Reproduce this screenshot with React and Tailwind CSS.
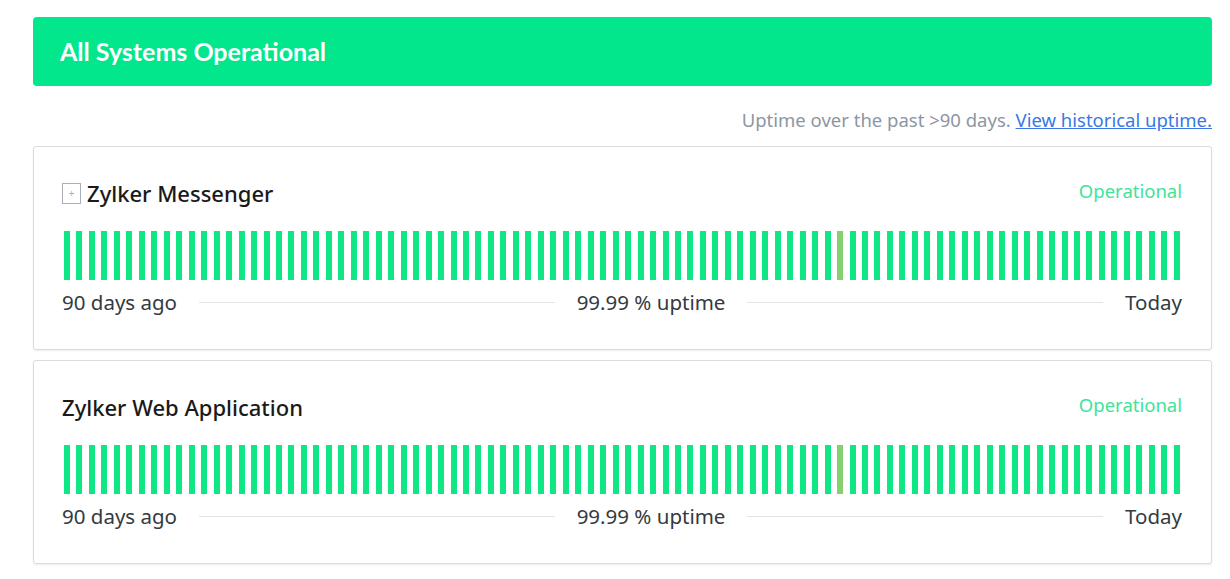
import React from "react";

const DAYS = 90;
// day 62 had a short partial outage
const degraded = new Set([62]);

const components = [
  { name: "Zylker Messenger", expandable: true },
  { name: "Zylker Web Application", expandable: false },
];

function UptimeBars() {
  return (
    <div className="flex justify-between h-[49px] mx-[2px]">
      {Array.from({ length: DAYS }).map((_, i) => (
        <div
          key={i}
          className={`w-[6px] h-full ${degraded.has(i) ? "bg-[#86d070]" : "bg-[#0fe785]"}`}
        />
      ))}
    </div>
  );
}

function ComponentCard({ name, expandable }) {
  return (
    <div className="bg-white border border-[#dcdcdc] rounded-[3px] shadow-[0_1px_2px_rgba(0,0,0,0.08)] pl-[28px] pr-[29px] pt-[31px] pb-[35px]">
      <div className="flex items-center justify-between h-[30px]">
        <div className="flex items-center gap-[6px]">
          {expandable && (
            <span className="w-[19px] h-[21px] border border-[#a9b0ba] flex items-center justify-center text-[10px] leading-none text-[#a9b0ba]">
              +
            </span>
          )}
          <h2 className="text-[22px] font-medium text-[#1a1a1a]">{name}</h2>
        </div>
        <span className="text-[18.5px] text-[#40e39a] -mt-[4px]">Operational</span>
      </div>
      <div className="mt-[23px]">
        <UptimeBars />
      </div>
      <div className="flex items-center mt-[10px] h-[24px] text-[20.5px] text-[#333a40]">
        <span>90 days ago</span>
        <div className="flex-1 h-px bg-[#e3e3e3] mx-[22px]" />
        <span>99.99 % uptime</span>
        <div className="flex-1 h-px bg-[#e3e3e3] mx-[22px]" />
        <span>Today</span>
      </div>
    </div>
  );
}

export default function App() {
  return (
    <div className="min-h-screen bg-white font-['Noto_Sans',sans-serif] px-[33px] pt-[17px] pb-4" style={{ width: 1245 }}>
      <div className="bg-[#02e78b] rounded-[4px] h-[69px] flex items-center px-[27px]">
        <h1 className="font-['Lato',sans-serif] font-bold text-[25px] text-white">All Systems Operational</h1>
      </div>

      <p className="text-right text-[18.5px] text-[#8c96a3] mt-[22px] mb-[14px] leading-[24px]">
        Uptime over the past &gt;90 days.{" "}
        <a href="#" className="text-[#3a78e6] underline">
          View historical uptime.
        </a>
      </p>

      <div className="flex flex-col gap-[10px]">
        {components.map((c) => (
          <ComponentCard key={c.name} {...c} />
        ))}
      </div>
    </div>
  );
}
